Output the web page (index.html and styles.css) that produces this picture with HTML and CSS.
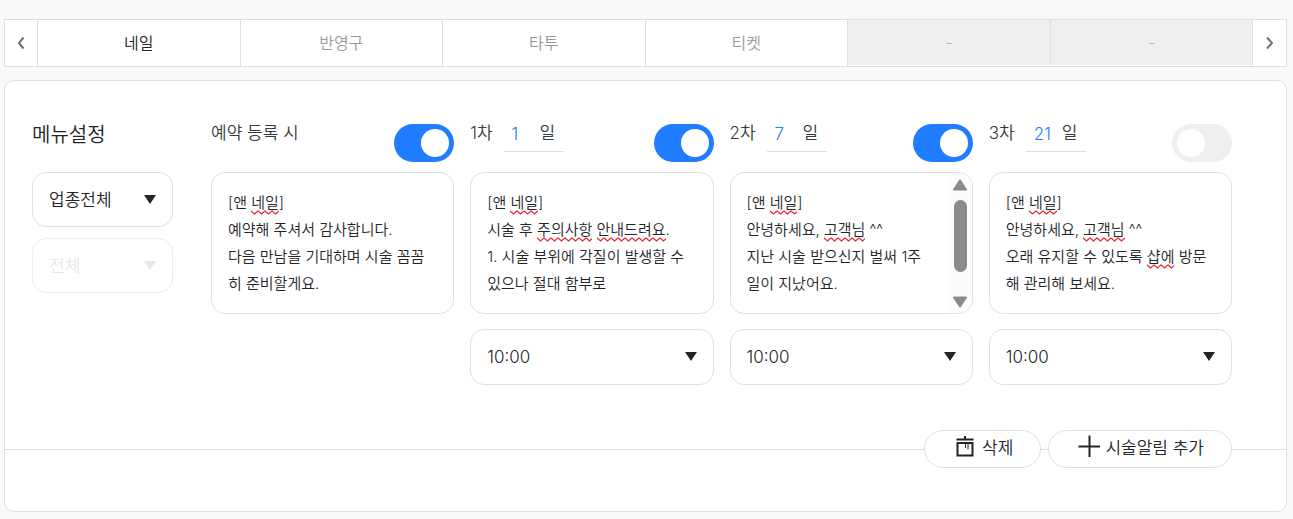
FILE: index.html
```html
<!DOCTYPE html>
<html lang="ko">
<head>
	<meta charset="UTF-8">
	<meta name="viewport" content="width=device-width, initial-scale=1.0">
	<title>시술알림</title>
	<link rel="stylesheet" href="styles.css">
	<script src="spell.js" defer></script>
</head>
<body>
	<nav class="tabs">
		<button class="tab-arrow" type="button" aria-label="이전">
			<svg width="8" height="14" viewBox="0 0 8 14"><path d="M6.5 1.500 L2 7 L6.5 12.500"/></svg>
		</button>
		<button class="tab active" type="button">네일</button>
		<button class="tab" type="button">반영구</button>
		<button class="tab" type="button">타투</button>
		<button class="tab" type="button">티켓</button>
		<button class="tab" type="button" disabled>-</button>
		<button class="tab" type="button" disabled>-</button>
		<button class="tab-arrow" type="button" aria-label="다음">
			<svg width="8" height="14" viewBox="0 0 8 14"><path d="M1 1.500 L6 7 L1 12.500"/></svg>
		</button>
	</nav>

	<main class="card">
		<div class="settings">
			<section class="menu">
				<h2 class="menu-title">메뉴설정</h2>
				<div class="select-box">
					<select aria-label="업종">
						<option>업종전체</option>
					</select>
				</div>
				<div class="select-box disabled">
					<select aria-label="메뉴" disabled>
						<option>전체</option>
					</select>
				</div>
			</section>

			<section class="alarm">
				<div class="alarm-head">
					<label for="on0">예약 등록 시</label>
					<input class="toggle" id="on0" type="checkbox" checked>
				</div>
				<div class="message">
					<textarea aria-label="예약 등록 시 메시지" spellcheck="false" data-words="네일">[앤 네일]
예약해 주셔서 감사합니다.
다음 만남을 기대하며 시술 꼼꼼히 준비할게요.</textarea>
				</div>
			</section>

			<section class="alarm">
				<div class="alarm-head">
					<label for="on1">1차</label>
					<label class="day"><input type="text" value="1">일</label>
					<input class="toggle" id="on1" type="checkbox" checked>
				</div>
				<div class="message">
					<textarea aria-label="1차 메시지" spellcheck="false" data-words="네일,주의사항,안내드려요">[앤 네일]
시술 후 주의사항 안내드려요.
1. 시술 부위에 각질이 발생할 수 있으나 절대 함부로</textarea>
				</div>
				<div class="select-box">
					<select aria-label="1차 발송 시간">
						<option>10:00</option>
					</select>
				</div>
			</section>

			<section class="alarm">
				<div class="alarm-head">
					<label for="on2">2차</label>
					<label class="day"><input type="text" value="7">일</label>
					<input class="toggle" id="on2" type="checkbox" checked>
				</div>
				<div class="message scroll">
					<textarea aria-label="2차 메시지" spellcheck="false" data-words="네일,고객님">[앤 네일]
안녕하세요, 고객님 ^^
지난 시술 받으신지 벌써 1주일이 지났어요.</textarea>
					<div class="scrollbar" aria-hidden="true">
						<svg width="16" height="12" viewBox="0 0 16 12"><path d="M8 1.500 L14 10.500 H2 Z"/></svg>
						<div class="thumb"></div>
						<svg width="16" height="12" viewBox="0 0 16 12"><path d="M8 10.500 L14 1.500 H2 Z"/></svg>
					</div>
				</div>
				<div class="select-box">
					<select aria-label="2차 발송 시간">
						<option>10:00</option>
					</select>
				</div>
			</section>

			<section class="alarm">
				<div class="alarm-head">
					<label for="on3">3차</label>
					<label class="day"><input type="text" value="21">일</label>
					<input class="toggle" id="on3" type="checkbox">
				</div>
				<div class="message">
					<textarea aria-label="3차 메시지" spellcheck="false" data-words="네일,고객님,샵에">[앤 네일]
안녕하세요, 고객님 ^^
오래 유지할 수 있도록 샵에 방문해 관리해 보세요.</textarea>
				</div>
				<div class="select-box">
					<select aria-label="3차 발송 시간">
						<option>10:00</option>
					</select>
				</div>
			</section>
		</div>

		<div class="actions">
			<button class="pill" type="button">
				<svg width="20" height="22" viewBox="0 0 20 22"><path d="M10 1 V4 M1.500 4.500 H18.500 M2.500 8 H17.500 V20.500 H2.500 Z"/><path class="thin" d="M10.500 8 V13 M13 8 V14.500"/></svg>
				삭제
			</button>
			<button class="pill add" type="button">
				<svg width="24" height="24" viewBox="0 0 24 24"><path d="M12.500 1.500 V23 M1.500 12.500 H23"/></svg>
				시술알림 추가
			</button>
		</div>
	</main>
</body>
</html>
```
FILE: styles.css
```css
*{
	box-sizing: border-box;
	padding: 0;
	margin: 0;
}
body{
	padding: 19px 6px 7px 4px;
	background-color: #f9f9fb;
	color: #212529;
	font-family: Inter, "Noto Sans CJK KR", sans-serif;
	font-size: 17px;
	font-weight: 350;
}
button,input,select,textarea{
	font: inherit;
	color: inherit;
}
button,select{
	cursor: pointer;
}
svg{
	flex: none;
	fill: none;
	stroke: currentColor;
}

/* 상단 탭 */
.tabs{
	display: flex;
	height: 48px;
	margin-bottom: 13px;
	border: 1px solid #dcdde1;
	background-color: #fff;
}
.tab{
	flex: 1;
	height: 46px;
	padding-bottom: 2px;
	border: 0;
	border-right: 1px solid #dcdde1;
	background-color: #fff;
	font-size: 16px;
	color: #999;
}
.tab.active{
	color: #212529;
}
.tab:disabled{
	height: 45px;
	background-color: #efefef;
	color: #a4b8bd;
}
.tab-arrow{
	display: flex;
	align-items: center;
	justify-content: center;
	width: 33px;
	border: 0;
	background-color: #fff;
	color: #6c7275;
}
.tab-arrow:first-child{
	border-right: 1px solid #dcdde1;
}
.tab-arrow svg{
	stroke-width: 2;
}

/* 설정 카드 */
.card{
	padding: 43px 0;
	border: 1px solid #dfe0e2;
	border-radius: 10px;
	background-color: #fff;
}
.settings{
	display: grid;
	grid-template-columns: 163px repeat(4, minmax(0, 1fr));
	column-gap: 16px;
	padding: 0 54px 0 27px;
}
.menu{
	display: flex;
	flex-direction: column;
	gap: 11px;
	width: 141px;
}
.menu-title{
	height: 37px;
	font-size: 20px;
	font-weight: 350;
	line-height: 22px;
}
.alarm-head{
	display: flex;
	height: 38px;
	margin-bottom: 10px;
	line-height: 18px;
	color: #343a40;
}
.day{
	display: flex;
	width: 60px;
	height: 28px;
	margin-left: 11px;
	border-bottom: 1px solid #dcdde1;
}
.day input{
	width: 36px;
	height: 20px;
	padding-left: 8px;
	border: 0;
	background: none;
	color: #217dff;
}
.toggle{
	appearance: none;
	display: flex;
	align-items: center;
	width: 60px;
	height: 38px;
	margin-left: auto;
	padding: 0 5px;
	border-radius: 19px;
	background-color: #efefef;
}
.toggle::before{
	content: "";
	width: 28px;
	height: 28px;
	border-radius: 50%;
	background-color: #fff;
}
.toggle:checked{
	justify-content: flex-end;
	background-color: #217dff;
}

/* 메시지 입력 */
.message{
	position: relative;
	height: 142px;
	margin-bottom: 15px;
	border: 1px solid #dfe0e2;
	border-radius: 14px;
	background-color: #fff;
	overflow: hidden;
}
.message textarea,.spell{
	display: block;
	width: 100%;
	height: 140px;
	padding: 16px 20px 0 16px;
	border: 0;
	background: none;
	font-size: 15px;
	line-height: 27px;
	white-space: pre-wrap;
	overflow: hidden;
	resize: none;
}
.message.scroll textarea,.message.scroll .spell{
	padding-right: 42px;
}
.spell{
	position: absolute;
	top: 0;
	left: 0;
	pointer-events: none;
}
.spell i{
	position: absolute;
	height: 5px;
	background: url("data:image/svg+xml,%3Csvg xmlns='http://www.w3.org/2000/svg' width='7' height='5'%3E%3Cpath d='M-1 .2 L0 1 L3.500 4 L7 1 L8 .2' fill='none' stroke='%23e5262b' stroke-width='1.300'/%3E%3C/svg%3E") repeat-x;
}
.scrollbar{
	position: absolute;
	top: 0;
	right: 0;
	display: flex;
	flex-direction: column;
	align-items: center;
	width: 23px;
	height: 140px;
	padding: 6px 0 5px;
	background-color: #fcfcfc;
	color: #8b8b8b;
}
.scrollbar svg{
	fill: currentColor;
	stroke-width: 2;
	stroke-linejoin: round;
}
.thumb{
	width: 13px;
	height: 72px;
	margin: 9px 0 auto;
	border-radius: 7px;
	background-color: #8b8b8b;
}

/* 셀렉트 */
.select-box{
	position: relative;
}
.select-box::after{
	content: "";
	position: absolute;
	top: 50%;
	right: 17px;
	margin-top: -5px;
	border: solid transparent;
	border-width: 9px 6px 0;
	border-top-color: #212529;
	pointer-events: none;
}
.select-box select{
	appearance: none;
	display: block;
	width: 100%;
	height: 55px;
	padding: 0 16px;
	border: 1px solid #dfe0e2;
	border-radius: 14px;
	background-color: #fff;
}
.alarm .select-box select{
	height: 56px;
}
.select-box.disabled select{
	border-color: #ececec;
	color: #e6e6e6;
	opacity: 1;
}
.select-box.disabled::after{
	border-top-color: #e6e6e6;
}

/* 하단 버튼 */
.actions{
	display: flex;
	justify-content: flex-end;
	gap: 7px;
	margin-top: 45px;
	padding-right: 54px;
	background: linear-gradient(#dfe0e2, #dfe0e2) center / 100% 1px no-repeat;
}
.pill{
	display: flex;
	align-items: center;
	gap: 7px;
	height: 38px;
	padding: 0 27px 6px 30px;
	border: 1px solid #dfe0e2;
	border-radius: 19px;
	background-color: #fff;
}
.pill.add{
	gap: 4px;
	padding-left: 28px;
}
.pill svg{
	stroke-width: 2;
}
.pill .thin{
	stroke-width: 1;
}
```
FILE: spell.js
```js
// 맞춤법 밑줄: 단어 위치를 잰 다음 그 아래에 물결선만 그린다
var areas = document.querySelectorAll(".message textarea");

for(var i = 0; i < areas.length; i++){
	drawMarks(areas[i]);
}

function drawMarks(area){
	var layer = document.createElement("div");
	layer.className = "spell";
	layer.textContent = area.value;
	area.parentNode.appendChild(layer);

	var text = layer.firstChild;
	var base = layer.getBoundingClientRect();
	var marks = area.dataset.words.split(",").map(function(word){
		var start = area.value.indexOf(word);
		var range = document.createRange();
		range.setStart(text, start);
		range.setEnd(text, start + word.length);
		var rect = range.getBoundingClientRect();
		var mark = document.createElement("i");
		mark.style.left = rect.left - base.left + "px";
		mark.style.top = (rect.top + rect.bottom) / 2 - base.top + 7 + "px";
		mark.style.width = rect.width + "px";
		return mark;
	});

	// 측정용 글자는 지우고 밑줄만 남긴다
	layer.textContent = "";
	marks.forEach(function(mark){
		layer.appendChild(mark);
	});
}
```
